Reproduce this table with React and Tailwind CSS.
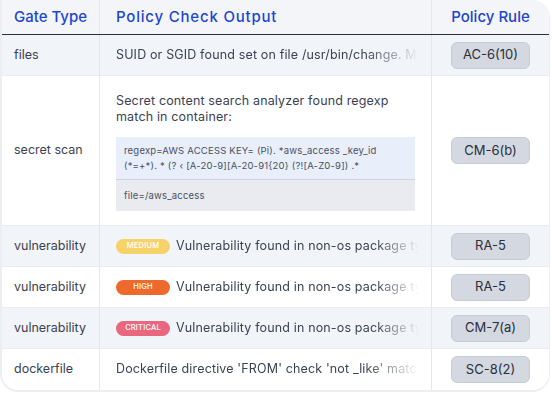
const rows = [
  { gate: 'files', text: 'SUID or SGID found set on file /usr/bin/change. Mode: 0o104755', rule: 'AC-6(10)', bg: 'bg-[#f1f4f8]' },
  { gate: 'secret scan', secret: true, rule: 'CM-6(b)', bg: 'bg-white' },
  { gate: 'vulnerability', badge: 'medium', text: 'Vulnerability found in non-os package type (python)', rule: 'RA-5', bg: 'bg-[#f1f4f8]' },
  { gate: 'vulnerability', badge: 'high', text: 'Vulnerability found in non-os package type (java)', rule: 'RA-5', bg: 'bg-white' },
  { gate: 'vulnerability', badge: 'critical', text: 'Vulnerability found in non-os package type (npm)', rule: 'CM-7(a)', bg: 'bg-[#f1f4f8]' },
  { gate: 'dockerfile', text: "Dockerfile directive 'FROM' check 'not _like' matched", rule: 'SC-8(2)', bg: 'bg-white' },
];

const badges = {
  medium: 'bg-[#f6d36a]',
  high: 'bg-[#ee6a2c]',
  critical: 'bg-[#e9677f]',
};

const regexLine1 = 'regexp=AWS ACCESS KEY= (Pi). *aws_access _key_id';
const regexLine2 = '(*=+*). * (? ‹ [A-20-9][A-20-91{20} (?![A-Z0-9]) .*';

function Badge({ level }) {
  return (
    <span className={`inline-flex h-[15px] w-[54px] shrink-0 items-center justify-center rounded-full text-[7.5px] font-medium uppercase tracking-wide text-white ${badges[level]}`}>
      {level}
    </span>
  );
}

export default function App() {
  return (
    <div className="h-[395px] w-[552px] bg-white font-['Inter',sans-serif] text-[#3b4252]">
      <div className="w-[550px] overflow-hidden rounded-tr-[18px] rounded-b-[18px] border-b-2 border-l-2 border-r border-[#eceef2]">
        {/* header */}
        <div className="grid h-[35px] grid-cols-[98px_332px_1fr] border-b-[1.5px] border-[#2b2f3a] bg-[#f3f5f8] text-[15px] font-medium text-[#1f45d0]">
          <div className="flex items-center border-r border-[#e3e6eb] pl-3">Gate Type</div>
          <div className="flex items-center border-r border-[#e3e6eb] pl-4 tracking-[0.8px]">Policy Check Output</div>
          <div className="flex items-center justify-center">Policy Rule</div>
        </div>

        {rows.map((r, i) => (
          <div
            key={i}
            className={`grid grid-cols-[98px_332px_1fr] border-b border-[#e8ebef] text-[12.5px] last:border-b-0 ${r.bg} ${r.secret ? 'h-[150px]' : 'h-[41px]'}`}
          >
            <div className="flex items-center border-r border-[#e3e6eb] pl-3">{r.gate}</div>
            <div className="flex min-w-0 items-center border-r border-[#e3e6eb] pl-4 pr-3">
              {r.secret ? (
                <div className="flex w-full flex-col gap-[12px] pr-1 pt-[2px]">
                  <p className="leading-[16px] tracking-[0.15px]">Secret content search analyzer found regexp match in container:</p>
                  <div className="bg-[#e9ebf0] text-[9.5px] tracking-[0.2px] text-[#4b5160]">
                    <div className="border-b border-[#cfd4dc] bg-[#e8eefa] px-2 py-[6px] leading-[15px]">
                      <div>{regexLine1}</div>
                      <div>{regexLine2}</div>
                    </div>
                    <div className="px-2 py-[8px] leading-[15px]">file=/aws_access</div>
                  </div>
                </div>
              ) : (
                <div className="flex min-w-0 items-center gap-[6px]">
                  {r.badge && <Badge level={r.badge} />}
                  <span className="overflow-hidden whitespace-nowrap tracking-[0.15px] [mask-image:linear-gradient(to_right,black_82%,transparent)]">
                    {r.text}
                  </span>
                </div>
              )}
            </div>
            <div className="flex items-center justify-center">
              <span className="flex h-[27px] w-[79px] items-center justify-center rounded-md border border-[#c6ccd6] bg-[#d3d8e1] text-[13px] text-[#2b2f3a]">
                {r.rule}
              </span>
            </div>
          </div>
        ))}
      </div>
    </div>
  );
}
